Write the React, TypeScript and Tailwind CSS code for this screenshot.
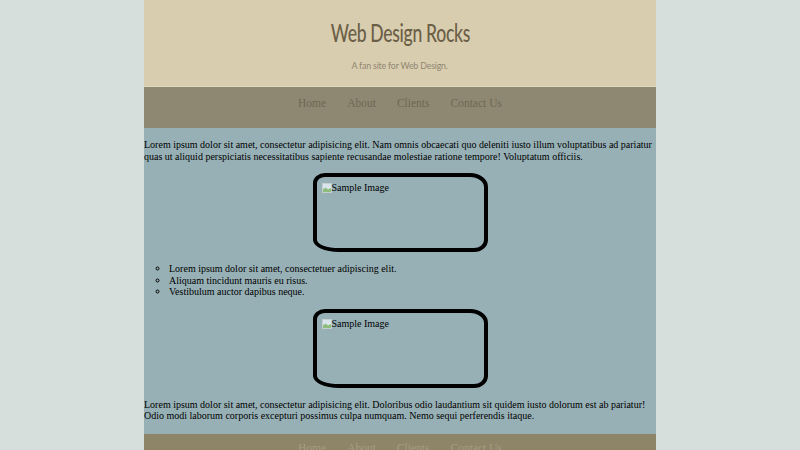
import React from "react";

const links = ["Home", "About", "Clients", "Contact Us"];

function BrokenIcon() {
  return (
    <svg width="10" height="10" viewBox="0 0 10 10" className="shrink-0 mt-[1px]">
      <rect x="0.5" y="0.5" width="9" height="9" fill="#e9efec" stroke="#c9d0cc" strokeWidth="0.6" />
      <rect x="1" y="1" width="8" height="5" fill="#d7e4ea" />
      <path d="M1 9 L1 6.5 L3.5 4.5 L6 6.5 L9 5 L9 9 Z" fill="#8fbb7c" />
    </svg>
  );
}

function SampleImage() {
  return (
    <div className="mx-auto w-[175px] h-[79px] border-4 border-black rounded-[12px_18px_14px_26px/10px_14px_12px_12px] pl-[5px] pt-[5px] flex items-start">
      <BrokenIcon />
      <span className="leading-[11.5px] text-[10px] text-black">Sample Image</span>
    </div>
  );
}

function Nav({ footer }: { footer?: boolean }) {
  return (
    <div
      className={
        footer
          ? "h-[42px] bg-[#8e8468] flex justify-center items-start pt-[7px] gap-[21px] text-[11.5px] leading-[14px] text-[#a69c83]"
          : "h-[42px] bg-[#8e8872] border-t border-[#e2d9c3] flex justify-center items-start pt-[9px] gap-[21px] text-[11.5px] leading-[14px] text-[#6f6753]"
      }
      style={{ fontFamily: '"Liberation Serif", serif' }}
    >
      {links.map((l) => (
        <span key={l}>{l}</span>
      ))}
    </div>
  );
}

export default function App() {
  return (
    <div className="min-h-[450px] bg-[#d6dfdb] flex justify-center">
      <div className="w-[512px] flex flex-col">
        <header className="h-[86px] bg-[#d9cdb0] flex flex-col items-center pt-[19px]">
          <h1
            className="text-[24px] leading-[28px] text-[#6b5f47] tracking-[-0.4px] font-medium scale-x-[0.73]"
            style={{ fontFamily: 'Lato, "Noto Sans", sans-serif' }}
          >
            Web Design Rocks
          </h1>
          <p
            className="mt-[12px] text-[10px] leading-[12px] text-[#8f8670] tracking-[-0.2px] scale-x-[0.88]"
            style={{ fontFamily: 'Lato, "Noto Sans", sans-serif' }}
          >
            A fan site for Web Design.
          </p>
        </header>
        <Nav />
        <main
          className="bg-[#97b0b6] pt-[11px] pb-[12px] flex flex-col gap-[11px] text-[10px] leading-[11.5px] text-black"
          style={{ fontFamily: '"Liberation Serif", serif' }}
        >
          <p>
            Lorem ipsum dolor sit amet, consectetur adipisicing elit. Nam omnis obcaecati quo deleniti iusto illum voluptatibus ad pariatur quas ut aliquid perspiciatis necessitatibus sapiente recusandae molestiae ratione tempore! Voluptatum officiis.
          </p>
          <SampleImage />
          <ul className="list-[circle] pl-[25px]">
            <li>Lorem ipsum dolor sit amet, consectetuer adipiscing elit.</li>
            <li>Aliquam tincidunt mauris eu risus.</li>
            <li>Vestibulum auctor dapibus neque.</li>
          </ul>
          <SampleImage />
          <p>
            Lorem ipsum dolor sit amet, consectetur adipisicing elit. Doloribus odio laudantium sit quidem iusto dolorum est ab pariatur! Odio modi laborum corporis excepturi possimus culpa numquam. Nemo sequi perferendis itaque.
          </p>
        </main>
        <Nav footer />
      </div>
    </div>
  );
}
